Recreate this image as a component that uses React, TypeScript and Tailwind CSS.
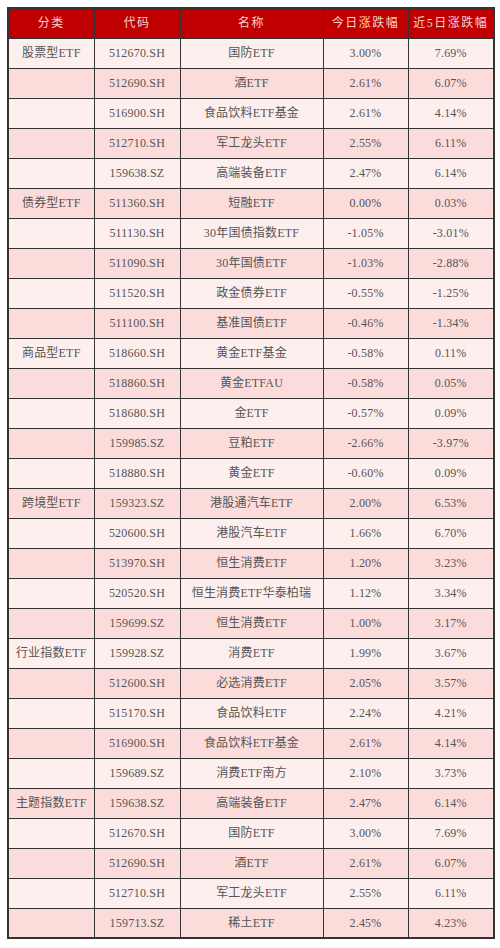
import React from "react";

const rows: [string, string, string, string, string][] = [
  ["股票型ETF", "512670.SH", "国防ETF", "3.00%", "7.69%"],
  ["", "512690.SH", "酒ETF", "2.61%", "6.07%"],
  ["", "516900.SH", "食品饮料ETF基金", "2.61%", "4.14%"],
  ["", "512710.SH", "军工龙头ETF", "2.55%", "6.11%"],
  ["", "159638.SZ", "高端装备ETF", "2.47%", "6.14%"],
  ["债券型ETF", "511360.SH", "短融ETF", "0.00%", "0.03%"],
  ["", "511130.SH", "30年国债指数ETF", "-1.05%", "-3.01%"],
  ["", "511090.SH", "30年国债ETF", "-1.03%", "-2.88%"],
  ["", "511520.SH", "政金债券ETF", "-0.55%", "-1.25%"],
  ["", "511100.SH", "基准国债ETF", "-0.46%", "-1.34%"],
  ["商品型ETF", "518660.SH", "黄金ETF基金", "-0.58%", "0.11%"],
  ["", "518860.SH", "黄金ETFAU", "-0.58%", "0.05%"],
  ["", "518680.SH", "金ETF", "-0.57%", "0.09%"],
  ["", "159985.SZ", "豆粕ETF", "-2.66%", "-3.97%"],
  ["", "518880.SH", "黄金ETF", "-0.60%", "0.09%"],
  ["跨境型ETF", "159323.SZ", "港股通汽车ETF", "2.00%", "6.53%"],
  ["", "520600.SH", "港股汽车ETF", "1.66%", "6.70%"],
  ["", "513970.SH", "恒生消费ETF", "1.20%", "3.23%"],
  ["", "520520.SH", "恒生消费ETF华泰柏瑞", "1.12%", "3.34%"],
  ["", "159699.SZ", "恒生消费ETF", "1.00%", "3.17%"],
  ["行业指数ETF", "159928.SZ", "消费ETF", "1.99%", "3.67%"],
  ["", "512600.SH", "必选消费ETF", "2.05%", "3.57%"],
  ["", "515170.SH", "食品饮料ETF", "2.24%", "4.21%"],
  ["", "516900.SH", "食品饮料ETF基金", "2.61%", "4.14%"],
  ["", "159689.SZ", "消费ETF南方", "2.10%", "3.73%"],
  ["主题指数ETF", "159638.SZ", "高端装备ETF", "2.47%", "6.14%"],
  ["", "512670.SH", "国防ETF", "3.00%", "7.69%"],
  ["", "512690.SH", "酒ETF", "2.61%", "6.07%"],
  ["", "512710.SH", "军工龙头ETF", "2.55%", "6.11%"],
  ["", "159713.SZ", "稀土ETF", "2.45%", "4.23%"],
];

const headers = ["分类", "代码", "名称", "今日涨跌幅", "近5日涨跌幅"];
const widths = ["w-[86px]", "w-[86px]", "w-[143px]", "w-[85px]", "w-[86px]"];

export default function App() {
  return (
    <div
      className="w-[500px] h-[948px] bg-white pt-[7px] pl-[7px]"
      style={{ fontFamily: '"Liberation Serif", "Noto Sans CJK SC", serif' }}
    >
      <table className="w-[486px] table-fixed border-collapse border-2 border-[#333333] text-[12px] text-[#555555]">
        <thead>
          <tr className="h-[30px] bg-[#c00000]">
            {headers.map((h, i) => (
              <th
                key={i}
                className={`${widths[i]} border border-[#333333] text-center font-normal text-[#f8d2cc] tracking-[1.5px]`}
              >
                {h}
              </th>
            ))}
          </tr>
        </thead>
        <tbody>
          {rows.map((r, ri) => (
            <tr
              key={ri}
              className={`h-[30px] ${ri % 2 === 0 ? "bg-[#fdefed]" : "bg-[#fcdcdb]"}`}
            >
              {r.map((c, ci) => (
                <td
                  key={ci}
                  className="border border-[#333333] text-center whitespace-nowrap tracking-[0.2px] p-0"
                >
                  {c}
                </td>
              ))}
            </tr>
          ))}
        </tbody>
      </table>
    </div>
  );
}
